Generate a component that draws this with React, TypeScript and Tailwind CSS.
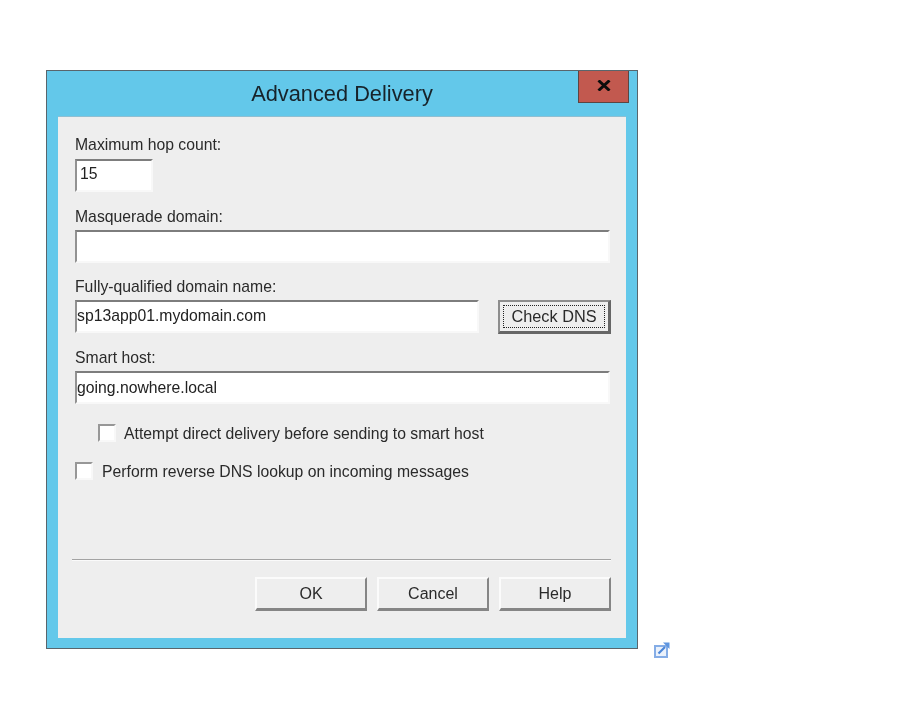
const font = "font-['Liberation_Sans',Arial,sans-serif]";

function Field({ value, className }: { value?: string; className: string }) {
  return (
    <input
      readOnly
      defaultValue={value}
      className={`h-[33px] border-2 border-t-[#7d7d7d] border-l-[#929292] border-r-[#f8f8f8] border-b-[#f8f8f8] bg-white text-[15.75px] text-[#222] outline-none ${className}`}
    />
  );
}

function Label({ children, className }: { children: string; className: string }) {
  return <div className={`h-[22px] text-[15.75px] leading-[22px] text-[#2a2a2a] ${className}`}>{children}</div>;
}

function Check({ label, className, gap }: { label: string; className: string; gap: string }) {
  return (
    <div className={`flex items-center ${className}`}>
      <span className="h-[18px] w-[18px] border-2 border-t-[#979797] border-l-[#979797] border-r-[#f8f8f8] border-b-[#f8f8f8] bg-white" />
      <span className={`relative top-[1px] text-[15.75px] leading-[18px] text-[#2a2a2a] ${gap}`}>{label}</span>
    </div>
  );
}

function Btn({ label }: { label: string }) {
  return (
    <button className="flex h-[34px] w-[112px] items-center justify-center border-t-2 border-l-2 border-r-[2px] border-b-[3px] border-t-[#fbfbfb] border-l-[#fbfbfb] border-r-[#858585] border-b-[#858585] bg-[#eeeeee] text-[16px] text-[#2a2a2a]">
      {label}
    </button>
  );
}

export default function App() {
  return (
    <div className={`flex min-h-[728px] items-start bg-white pl-[46px] pt-[70px] blur-[0.4px] ${font}`}>
      <div className="flex h-[579px] w-[592px] flex-col border border-[#59656c] bg-[#63c8ea]">
        {/* Title bar */}
        <div className="relative h-[45px] shrink-0">
          <div className="pt-[9px] text-center text-[21.8px] leading-[28px] text-[#17232a]">Advanced Delivery</div>
          <div className="absolute right-[8px] top-0 flex h-[32px] w-[51px] items-center justify-center border border-t-0 border-[#5c4542] bg-[#c2594f] pb-[2px]">
            <svg width="14" height="11" viewBox="0 0 14 11">
              <path d="M1.5 0.5 L12.5 10.5 M12.5 0.5 L1.5 10.5" stroke="#0c0c0c" strokeWidth="3" fill="none" />
            </svg>
          </div>
        </div>

        {/* Panel */}
        <div className="mx-[11px] flex h-[522px] flex-col border-t border-t-[#8fbfd2] bg-[#eeeeee] pl-[17px] pr-[15px] pt-[17px]">
          <Label className="">Maximum hop count:</Label>
          <Field value="15" className="mt-[3px] w-[78px] pl-[3px] pb-[4px]" />
          <Label className="mt-[14px]">Masquerade domain:</Label>
          <Field className="mt-[2px] w-[535px]" />
          <Label className="mt-[13px]">Fully-qualified domain name:</Label>
          <div className="mt-[2px] flex items-start">
            <Field value="sp13app01.mydomain.com" className="w-[404px] pb-[2px]" />
            <button className="ml-[19px] h-[34px] w-[113px] border-t-2 border-l-2 border-r-[3px] border-b-[3px] border-t-[#8d8d8d] border-l-[#8d8d8d] border-r-[#666] border-b-[#666] bg-[#eeeeee] p-[3px] text-[16.3px] text-[#2a2a2a]">
              <span className="flex h-full w-full items-center justify-center border border-dotted border-[#222]">Check DNS</span>
            </button>
          </div>
          <Label className="mt-[13px]">Smart host:</Label>
          <Field value="going.nowhere.local" className="mt-[2px] w-[535px]" />
          <Check label="Attempt direct delivery before sending to smart host" className="ml-[23px] mt-[20px]" gap="ml-[8px]" />
          <Check label="Perform reverse DNS lookup on incoming messages" className="mt-[20px]" gap="ml-[9px]" />

          {/* Footer */}
          <div className="-ml-[3px] mt-[79px] w-[539px] border-t border-b border-t-[#a3a3a3] border-b-[#fafafa]" />
          <div className="mt-[16px] flex justify-end gap-[10px]">
            <Btn label="OK" />
            <Btn label="Cancel" />
            <Btn label="Help" />
          </div>
        </div>
      </div>

      {/* External link marker */}
      <svg className="ml-[16px] mt-[572px]" width="16" height="16" viewBox="0 0 16 16">
        <rect x="1" y="4" width="12" height="11" fill="#eaf1fb" stroke="#85ade6" strokeWidth="2" />
        <path d="M4.5 11.5 L11 5" stroke="#4a86d8" strokeWidth="2.2" />
        <path d="M9 0.5 H15.5 V7 Z" fill="#5f96e0" />
      </svg>
    </div>
  );
}
